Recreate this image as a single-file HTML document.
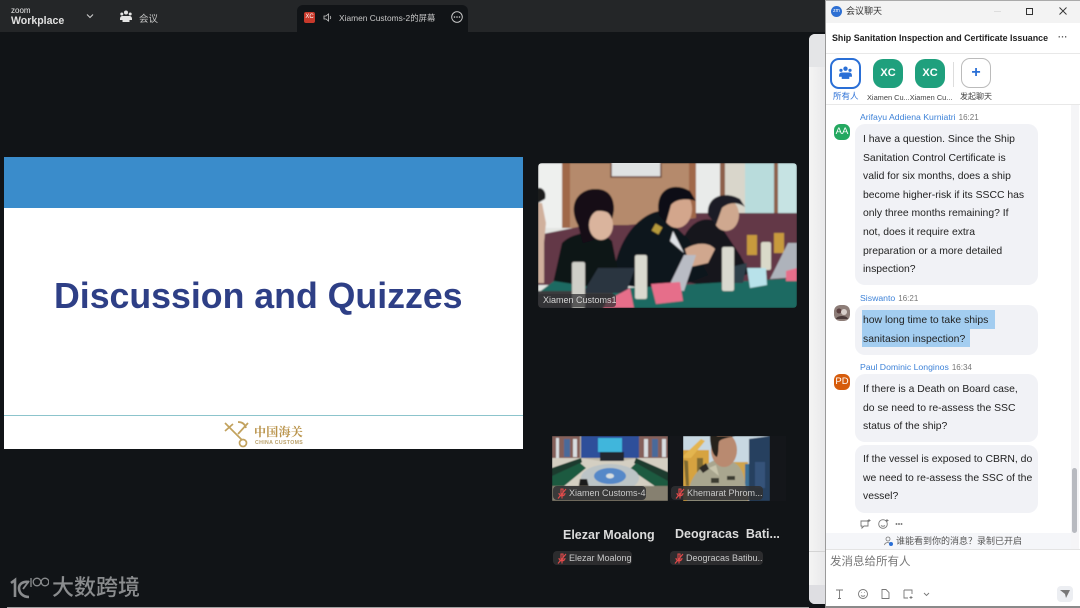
<!DOCTYPE html>
<html><head><meta charset="utf-8">
<style>
html,body{margin:0;padding:0;width:1080px;height:608px;overflow:hidden;background:#111417}
*{box-sizing:border-box}
body{font-family:"Liberation Sans","Noto Sans CJK SC",sans-serif;position:relative}
#w{position:absolute;left:0;top:0;width:1080px;height:608px;filter:blur(.3px)}
.a{position:absolute;white-space:nowrap}
.msg{position:absolute;left:855px;width:183px;background:#f1f2f6;border-radius:10px;font-size:10.4px;line-height:18.6px;color:#222;padding:7px 8px 0;white-space:nowrap}
.nm{position:absolute;left:860px;font-size:8.700px;color:#3f83d8;white-space:nowrap}
.nm span{color:#777;margin-left:3px;font-size:8px}
.av{position:absolute;left:834px;width:16px;height:16px;border-radius:6px;color:#fff;font-size:9.5px;line-height:16px;text-align:center}
.tag{position:absolute;background:rgba(48,48,50,.88);border-radius:4px;color:#c9c9c9;font-size:9px;height:14px;line-height:14px;padding-left:16px;white-space:nowrap}
.mute{position:absolute;left:4px;top:2px}
</style></head><body><div id="w">
<!-- top bar -->
<div class="a" style="left:0;top:0;width:825px;height:32px;background:#242628"></div>
<div class="a" style="left:11px;top:7px;font-size:8px;color:#e8e8e8;line-height:8px">zoom</div>
<div class="a" style="left:11px;top:14.500px;font-size:11px;font-weight:bold;color:#e0e0e0;line-height:12px;transform:scaleX(.96);transform-origin:left">Workplace</div>
<svg class="a" style="left:86px;top:13px" width="8" height="6" viewBox="0 0 8 6"><path d="M1 1.500L4 4.500L7 1.500" fill="none" stroke="#ccc" stroke-width="1.100"/></svg>
<svg class="a" style="left:120px;top:10px" width="12" height="13" viewBox="0 0 12 13" fill="#e4e4e4"><circle cx="6" cy="2.500" r="2"/><circle cx="1.800" cy="4" r="1.500"/><circle cx="10.200" cy="4" r="1.500"/><path d="M0 9c0-2 1-3 2.500-3L9.500 6C11 6 12 7 12 9L12 10 0 10Z"/><path d="M2.500 8.500h7V12h-7z"/></svg>
<div class="a" style="left:139px;top:10.500px;font-size:9.500px;color:#c8c8c8">会议</div>
<div class="a" style="left:297px;top:5px;width:171px;height:27px;background:#111417;border-radius:6px 6px 0 0"></div>
<div class="a" style="left:304px;top:12px;width:11px;height:11px;background:#c8392b;border-radius:2px;color:#fff;font-size:6px;line-height:11px;text-align:center">XC</div>
<svg class="a" style="left:323px;top:13px" width="10" height="9" viewBox="0 0 10 9"><path d="M1 3H3L5.500 1V8L3 6H1Z" fill="none" stroke="#ccc" stroke-width=".8"/><path d="M7 3c1 .8 1 2.200 0 3" fill="none" stroke="#ccc" stroke-width=".8"/></svg>
<div class="a" style="left:339px;top:11.500px;font-size:8.400px;color:#c8c8c8">Xiamen Customs-2的屏幕</div>
<svg class="a" style="left:451px;top:11px" width="12" height="12" viewBox="0 0 12 12"><circle cx="6" cy="6" r="5.300" fill="none" stroke="#d0d0d0" stroke-width=".9"/><circle cx="3.500" cy="6" r=".8" fill="#d0d0d0"/><circle cx="6" cy="6" r=".8" fill="#d0d0d0"/><circle cx="8.500" cy="6" r=".8" fill="#d0d0d0"/></svg>

<!-- slide -->
<div class="a" style="left:4px;top:157px;width:519px;height:292px;background:#fff"></div>
<div class="a" style="left:4px;top:157px;width:519px;height:51px;background:#3a8ccb"></div>
<div class="a" style="left:4px;top:415px;width:519px;height:1px;background:#8cc4cc"></div>
<div class="a" style="left:54px;top:276px;font-size:35.700px;font-weight:bold;color:#2e3f86;line-height:40px">Discussion and Quizzes</div>
<svg class="a" style="left:223px;top:420px" width="28" height="28" viewBox="0 0 28 28" fill="none" stroke="#c2a25e" stroke-width="1.700"><path d="M2 3L19 20M2 11L10 4M25 3L15 14"/><circle cx="20" cy="23" r="3.500"/><path d="M15 2c4 0 7 2 8 6"/></svg>
<div class="a" style="left:254px;top:425px;font-size:12px;color:#b9934a;font-family:'Noto Serif CJK SC',serif;line-height:14px;letter-spacing:.3px;font-weight:bold">中国海关</div>
<div class="a" style="left:255px;top:439.500px;font-size:5.200px;font-weight:bold;color:#b9a06a;letter-spacing:.35px;line-height:6px">CHINA CUSTOMS</div>

<!-- main video -->
<svg class="a" style="left:538px;top:163px;border-radius:4px" width="259" height="145" viewBox="0 0 259 145">
<defs><filter id="b"><feGaussianBlur stdDeviation=".9"/></filter></defs>
<g filter="url(#b)">
<rect width="259" height="145" fill="#e3e5e2"/>
<rect x="0" width="24" height="65" fill="#eef0ee"/>
<rect x="24" width="134" height="65" fill="#b58a6c"/>
<rect x="24" width="8" height="65" fill="#a0674a"/><rect x="151" width="7" height="55" fill="#a0674a"/>
<rect x="73" y="-3" width="50" height="17" fill="#dfe2e2" stroke="#6e4b3e" stroke-width="1.500"/>
<rect x="158" width="24" height="50" fill="#e9ebea"/>
<rect x="182" width="5" height="50" fill="#8d5f48"/>
<rect x="187" width="20" height="50" fill="#d9d6cb"/>
<rect x="207" width="30" height="50" fill="#b9dcdc"/>
<rect x="236" width="4" height="50" fill="#8d5f48"/>
<rect x="240" width="19" height="50" fill="#c6e3e3"/>
<path d="M0 72L50 62H90L158 55V50H259V122H0Z" fill="#633746"/>
<rect x="209" y="72" width="10" height="20" fill="#c79a3c"/><rect x="236" y="70" width="10" height="20" fill="#c79a3c"/>
<!-- far-left person -->
<path d="M0 40V120H6V80L8 60 4 40Z" fill="#d0b09c"/>
<path d="M0 40V25C5 24 9 30 7 36Z" fill="#1a1a1e"/>
<!-- third man -->
<path d="M144 80C150 58 170 50 182 62L202 92 212 110 175 125 146 118Z" fill="#12151c"/>
<ellipse cx="188" cy="52" rx="13" ry="16" fill="#cfa88f"/>
<path d="M170 52C168 32 188 28 202 36L207 44C198 38 190 40 184 45L178 62Z" fill="#1c1f26"/>
<!-- man -->
<path d="M76 108C82 70 105 50 122 48L150 76 170 112 128 128 84 122Z" fill="#10131a"/>
<ellipse cx="139" cy="46" rx="15" ry="19" fill="#d3a68c"/>
<path d="M121 52C116 26 135 18 152 28L158 38C148 35 138 36 133 42L128 60Z" fill="#0f0f14"/>
<path d="M135 68L146 90 132 78Z" fill="#dfe2e6"/>
<path d="M147 86C160 78 172 80 177 86L170 100 152 104Z" fill="#d0a78e"/>
<rect x="115" y="62" width="8" height="8" fill="#b69a3a" transform="rotate(30 119 66)"/>
<!-- woman -->
<path d="M14 125L24 80C35 68 62 66 74 78L84 128H30Z" fill="#101218"/>
<path d="M40 62C28 38 44 25 58 26C77 26 78 45 74 56L62 75L45 80Z" fill="#131116"/>
<ellipse cx="63" cy="62" rx="12" ry="15" fill="#dab49d"/>
<path d="M44 60C42 38 56 30 66 30C76 32 77 46 75 52C68 48 60 46 54 50Z" fill="#131116"/>
<!-- table & laptops -->
<path d="M0 130L16 118 60 125H90L259 115V145H0Z" fill="#1d6b62"/>
<path d="M0 128H75V145H0Z" fill="#3b3b3d"/>
<path d="M45 130L60 105H97L88 130Z" fill="#2b3640"/>
<path d="M129 127L146 92H158L146 128Z" fill="#b9bcc4"/>
<path d="M189 120L193 104 209 100 205 120Z" fill="#2e3f4a"/>
<path d="M232 116L250 80H259V114Z" fill="#aeb3bb"/>
<rect x="97" y="92" width="12" height="44" fill="#d9d9cf" rx="2"/>
<rect x="34" y="99" width="13" height="46" fill="#cfcfc8" rx="2"/>
<rect x="184" y="84" width="12" height="44" fill="#d9d9cf" rx="2"/>
<rect x="223" y="79" width="10" height="28" fill="#d9d9c9" rx="2"/>
<path d="M113 121L142 119 145 138 118 141Z" fill="#e66e8a"/>
<path d="M70 137L92 125 96 145H65Z" fill="#e66e8a"/>
<path d="M209 105H228L229 122 212 125Z" fill="#b8e2ea"/>
<path d="M248 108L259 105V118L248 118Z" fill="#e66e8a"/>
</g>
</svg>
<div class="a" style="left:538px;top:294px;width:78px;height:13px;background:rgba(50,50,52,.75);border-radius:3px;font-size:9px;color:#d5d5d5;line-height:13px;padding-left:5px;overflow:hidden">Xiamen Customs1</div>

<!-- small videos -->
<svg class="a" style="left:552px;top:436px" width="116" height="65" viewBox="0 0 116 65">
<defs><filter id="c"><feGaussianBlur stdDeviation=".6"/></filter></defs>
<g filter="url(#c)">
<rect width="116" height="65" fill="#bfb8a8"/>
<rect x="0" width="28" height="24" fill="#85605a"/><rect x="87" width="29" height="24" fill="#85605a"/>
<rect x="4" y="2" width="3" height="20" fill="#d8dde0"/><rect x="12" y="3" width="6" height="18" fill="#4a6b9a"/><rect x="21" y="3" width="4" height="18" fill="#d8dde0"/>
<rect x="92" y="3" width="4" height="18" fill="#d8dde0"/><rect x="100" y="3" width="6" height="18" fill="#4a6b9a"/><rect x="110" y="3" width="4" height="18" fill="#d8dde0"/>
<rect x="29" width="58" height="22" fill="#2e4f9a"/><rect x="46" y="2" width="24" height="14" fill="#3fb6dc"/>
<rect x="48" y="16" width="24" height="9" fill="#20282e"/>
<path d="M0 22H29L48 25H70L87 22H116V65H0Z" fill="#d4cfc2"/>
<path d="M0 32L29 22 30 26 6 47H0Z" fill="#1a3a2d"/>
<path d="M0 40L28 27 34 32 6 55H0Z" fill="#1d5a41"/>
<path d="M116 36L84 22 82 27 116 48Z" fill="#1a3a2d"/>
<path d="M116 45L84 27 78 33 110 55H116Z" fill="#1d5a41"/>
<ellipse cx="58" cy="42" rx="29" ry="14" fill="#bcc4c6"/><ellipse cx="58" cy="40" rx="16" ry="8" fill="#5488c8"/><ellipse cx="58" cy="40" rx="4" ry="2.500" fill="#d8dfe0"/>
<path d="M28 43H35L38 55H26Z" fill="#1e1c1c"/>
<rect x="0" y="50" width="116" height="15" fill="#86806f"/>
</g>
</svg>
<div class="a" style="left:670px;top:436px;width:116px;height:65px;background:#14161a"></div>
<svg class="a" style="left:683px;top:436px" width="87" height="65" viewBox="0 0 87 65">
<defs><filter id="d"><feGaussianBlur stdDeviation=".6"/></filter></defs>
<g filter="url(#d)">
<rect width="87" height="65" fill="#c8d8e2"/>
<rect x="0" y="14" width="26" height="51" fill="#d6a33f"/><path d="M0 20L18 3 22 5 8 22H0Z" fill="#e3b550"/><path d="M1 24L3 50H6L5 25ZM14 22H20V40H14Z" fill="#7f6a33"/>
<rect x="48" y="26" width="17" height="39" fill="#cfa44d"/>
<rect x="62" y="28" width="6" height="28" fill="#3a6f96"/>
<path d="M66 3L87 0V65H66Z" fill="#27405f"/>
<rect x="72" y="26" width="10" height="26" fill="#35537a"/>
<path d="M4 65C6 42 14 32 32 24L50 26C58 30 62 36 64 65Z" fill="#a9a68f"/>
<path d="M26 32L36 40 33 29Z" fill="#c8c4ac"/>
<path d="M16 32L23 27 26 33 20 37Z" fill="#2e2c26"/>
<ellipse cx="41" cy="14" rx="13" ry="17" fill="#b98a70"/>
<path d="M27 0H52C44 2 37 3 36 6 35 11 36 16 34 21 30 20 27 10 27 0Z" fill="#26211f"/>
<path d="M28 42H36V47H28ZM44 40H52V44H44Z" fill="#3e3c33"/>
</g>
</svg>
<div class="tag" style="left:553px;top:486px;width:93px">Xiamen Customs-4<svg class="mute" width="10" height="11" viewBox="0 0 10 11"><path d="M4 1h2v6H4zM2 5c0 4 6 4 6 0M5 8.500V10.500M1 10.500L9 1" fill="none" stroke="#e24b4b" stroke-width="1.100"/></svg></div>
<div class="tag" style="left:671px;top:486px;width:92px;overflow:hidden">Khemarat Phrom...<svg class="mute" width="10" height="11" viewBox="0 0 10 11"><path d="M4 1h2v6H4zM2 5c0 4 6 4 6 0M5 8.500V10.500M1 10.500L9 1" fill="none" stroke="#e24b4b" stroke-width="1.100"/></svg></div>
<div class="a" style="left:563px;top:527.500px;font-size:12.500px;font-weight:bold;color:#dcdcdc;line-height:14px">Elezar Moalong</div>
<div class="a" style="left:675px;top:527px;font-size:12.500px;font-weight:bold;color:#dcdcdc;line-height:14px">Deogracas&nbsp; Bati...</div>
<div class="tag" style="left:553px;top:551px;width:79px;overflow:hidden">Elezar Moalong<svg class="mute" width="10" height="11" viewBox="0 0 10 11"><path d="M4 1h2v6H4zM2 5c0 4 6 4 6 0M5 8.500V10.500M1 10.500L9 1" fill="none" stroke="#e24b4b" stroke-width="1.100"/></svg></div>
<div class="tag" style="left:670px;top:551px;width:93px;overflow:hidden">Deogracas Batibu...<svg class="mute" width="10" height="11" viewBox="0 0 10 11"><path d="M4 1h2v6H4zM2 5c0 4 6 4 6 0M5 8.500V10.500M1 10.500L9 1" fill="none" stroke="#e24b4b" stroke-width="1.100"/></svg></div>

<!-- watermark -->
<svg class="a" style="left:9px;top:575px" width="40" height="26" viewBox="0 0 40 26" fill="none" stroke="#8a8c8e" stroke-width="2.600"><path d="M2 8L6 5V22"/><path d="M20 7C14 6 10 9 10 13 10 18 14 22 20 22"/><path d="M14 14L20 6" stroke-width="1.800"/><path d="M22 3V12" stroke-width="1.300"/><circle cx="28" cy="7" r="3.800" stroke-width="1.300"/><circle cx="36" cy="7" r="3.800" stroke-width="1.300"/></svg>
<div class="a" style="left:52px;top:576px;font-size:22px;font-weight:500;color:#8a8c8e;line-height:24px">大数跨境</div>
<div class="a" style="left:7px;top:607px;width:802px;height:1px;background:#a0a0a0"></div>

<!-- background window sliver -->
<div class="a" style="left:809px;top:34px;width:20px;height:570px;background:linear-gradient(90deg,#f4f4f4,#e6e6e8);border-radius:6px 0 0 6px;overflow:hidden">
<div style="position:absolute;left:0;top:0;width:20px;height:33px;background:#e4e5e7"></div>
<div style="position:absolute;left:0;top:517px;width:20px;height:1px;background:#d4d4d4"></div>
<div style="position:absolute;left:0;top:551px;width:20px;height:19px;background:#dedee2"></div>
</div>

<!-- chat window -->
<div class="a" style="left:825px;top:0;width:255px;height:608px;background:#fff;border-left:1px solid #9a9a9a;border-top:1px solid #aaa"></div>
<div class="a" style="left:826px;top:1px;width:254px;height:22px;background:#f3f3f3"></div>
<div class="a" style="left:831px;top:5.500px;width:11px;height:11px;border-radius:50%;background:#2d6fd3;color:#fff;font-size:5px;line-height:11px;text-align:center">zm</div>
<div class="a" style="left:846px;top:5px;font-size:9px;color:#333;line-height:13px">会议聊天</div>
<div class="a" style="left:994px;top:11px;width:7px;height:1px;background:#ddd"></div>
<div class="a" style="left:1026px;top:8px;width:7px;height:7px;border:1px solid #333"></div>
<svg class="a" style="left:1059px;top:7px" width="8" height="8" viewBox="0 0 8 8"><path d="M.5 .5L7.500 7.500M7.500 .5L.5 7.500" stroke="#333" stroke-width=".9"/></svg>
<div class="a" style="left:832px;top:32px;font-size:8.900px;font-weight:bold;color:#222;line-height:12px">Ship Sanitation Inspection and Certificate Issuance</div>
<div class="a" style="left:1058px;top:32px;font-size:9px;color:#555;line-height:10px;letter-spacing:.2px;font-weight:bold">···</div>
<div class="a" style="left:826px;top:53px;width:254px;height:1px;background:#e8e8e8"></div>
<div class="a" style="left:830px;top:58px;width:31px;height:31px;border:2px solid #2a6fd6;border-radius:9px;background:#fff"></div>
<svg class="a" style="left:839px;top:66px" width="13" height="14" viewBox="0 0 12 13" fill="#2a6fd6"><circle cx="6" cy="2.500" r="2"/><circle cx="1.800" cy="4" r="1.500"/><circle cx="10.200" cy="4" r="1.500"/><path d="M0 9c0-2 1-3 2.500-3L9.500 6C11 6 12 7 12 9L12 10 0 10Z"/><path d="M2.500 8.500h7V12h-7z"/></svg>
<div class="a" style="left:873px;top:59px;width:30px;height:29px;border-radius:10px;background:#1fa07d;color:#fff;font-weight:bold;font-size:11px;line-height:29px;text-align:center">XC</div>
<div class="a" style="left:915px;top:59px;width:30px;height:29px;border-radius:10px;background:#1fa07d;color:#fff;font-weight:bold;font-size:11px;line-height:29px;text-align:center">XC</div>
<div class="a" style="left:953px;top:62px;width:1px;height:25px;background:#ddd"></div>
<div class="a" style="left:961px;top:58px;width:30px;height:30px;border:1px solid #bbb;border-radius:9px;color:#2a6fd6;font-size:16px;font-weight:bold;line-height:27px;text-align:center">+</div>
<div class="a" style="left:833px;top:91px;font-size:8.500px;color:#2a6fd6;line-height:11px">所有人</div>
<div class="a" style="left:867px;top:91.500px;font-size:7.400px;color:#444;line-height:11px">Xiamen Cu...Xiamen Cu...</div>
<div class="a" style="left:960px;top:91px;font-size:8px;color:#444;line-height:11px">发起聊天</div>
<div class="a" style="left:826px;top:104px;width:254px;height:1px;background:#e8e8e8"></div>

<!-- scrollbar -->
<div class="a" style="left:1071px;top:105px;width:8px;height:445px;background:#f5f5f7"></div>
<div class="a" style="left:1072px;top:468px;width:5px;height:65px;background:#b8bac0;border-radius:3px"></div>

<!-- messages -->
<div class="nm" style="top:112px">Arifayu Addiena Kurniatri<span>16:21</span></div>
<div class="av" style="top:124px;background:#24a860">AA</div>
<div class="msg" style="top:124px;height:161px">I have a question. Since the Ship<br>Sanitation Control Certificate is<br>valid for six months, does a ship<br>become higher-risk if its SSCC has<br>only three months remaining? If<br>not, does it require extra<br>preparation or a more detailed<br>inspection?</div>
<div class="nm" style="top:293px">Siswanto<span>16:21</span></div>
<svg class="av" style="top:305px" width="16" height="16" viewBox="0 0 16 16"><rect width="16" height="16" rx="6" fill="#8d7d78"/><circle cx="5" cy="6" r="2.500" fill="#5a3f3f"/><circle cx="10" cy="7" r="3" fill="#d8cfcb"/><path d="M2 14C3 10 13 10 14 14Z" fill="#4a3a3a"/></svg>
<div class="msg" style="top:305px;height:50px"></div>
<div class="a" style="left:862px;top:310px;width:133px;height:18.500px;background:#a3cdf0"></div>
<div class="a" style="left:862px;top:328.500px;width:108px;height:18.500px;background:#a3cdf0"></div>
<div class="a" style="left:863px;top:312px;font-size:10.400px;line-height:18.600px;color:#222">how long time to take ships<br>sanitasion inspection?</div>
<div class="nm" style="top:362px">Paul Dominic Longinos<span>16:34</span></div>
<div class="av" style="top:374px;background:#d65c0c">PD</div>
<div class="msg" style="top:374px;height:68px">If there is a Death on Board case,<br>do se need to re-assess the SSC<br>status of the ship?</div>
<div class="msg" style="top:445px;height:68px;padding-top:6px">If the vessel is exposed to CBRN, do<br>we need to re-assess the SSC of the<br>vessel?</div>
<svg class="a" style="left:860px;top:518px" width="50" height="12" viewBox="0 0 50 12" fill="none" stroke="#777" stroke-width=".9"><path d="M1 3H8V8H4L2 10V8H1Z"/><path d="M9 1V4M7.500 2.500H10.500"/><circle cx="23" cy="6" r="4.300"/><path d="M21 7.500c1 1 3 1 4 0"/><path d="M27 1V4M25.500 2.500H28.500"/><circle cx="36.500" cy="6" r=".5"/><circle cx="39" cy="6" r=".5"/><circle cx="41.500" cy="6" r=".5"/></svg>
<div class="a" style="left:826px;top:533px;width:245px;height:17px;background:#f5f6f9"></div>
<svg class="a" style="left:884px;top:536px" width="10" height="11" viewBox="0 0 10 11" fill="none"><circle cx="4" cy="3" r="2" stroke="#777" stroke-width=".8"/><path d="M.5 9c.5-3 5-3 5.500-1" stroke="#777" stroke-width=".8"/><circle cx="7" cy="8" r="2" fill="#2a6fd6"/></svg>
<div class="a" style="left:896px;top:535px;font-size:9px;color:#555;line-height:12px">谁能看到你的消息？录制已开启</div>
<div class="a" style="left:826px;top:549px;width:254px;height:1px;background:#e4e4e4"></div>
<div class="a" style="left:830px;top:555px;font-size:11.500px;color:#777;line-height:15px">发消息给所有人</div>
<svg class="a" style="left:834px;top:588px" width="100" height="12" viewBox="0 0 100 12" fill="none" stroke="#777" stroke-width=".9"><path d="M2 2H9M5.500 2V10.500M4 10.500H7"/><circle cx="29" cy="6" r="4.500"/><path d="M27 7.500c1 1 3 1 4 0M27 4.500h.5M30.500 4.500h.5"/><path d="M48 1.500H52L55 4.500V10.500H48Z"/><path d="M70 2H78V6M70 2V10H74M77 8V11M75.500 9.500H78.500"/><path d="M90 5L92.500 7.500 95 5"/></svg>
<div class="a" style="left:1057px;top:586px;width:16px;height:16px;background:#eceef2;border-radius:4px"></div>
<svg class="a" style="left:1060px;top:590px" width="10" height="8" viewBox="0 0 10 8"><path d="M0 0H10L6 8 5 4Z" fill="#777"/></svg>
<div class="a" style="left:825px;top:606px;width:255px;height:2px;background:#8a8a8a"></div>
</div></body></html>
